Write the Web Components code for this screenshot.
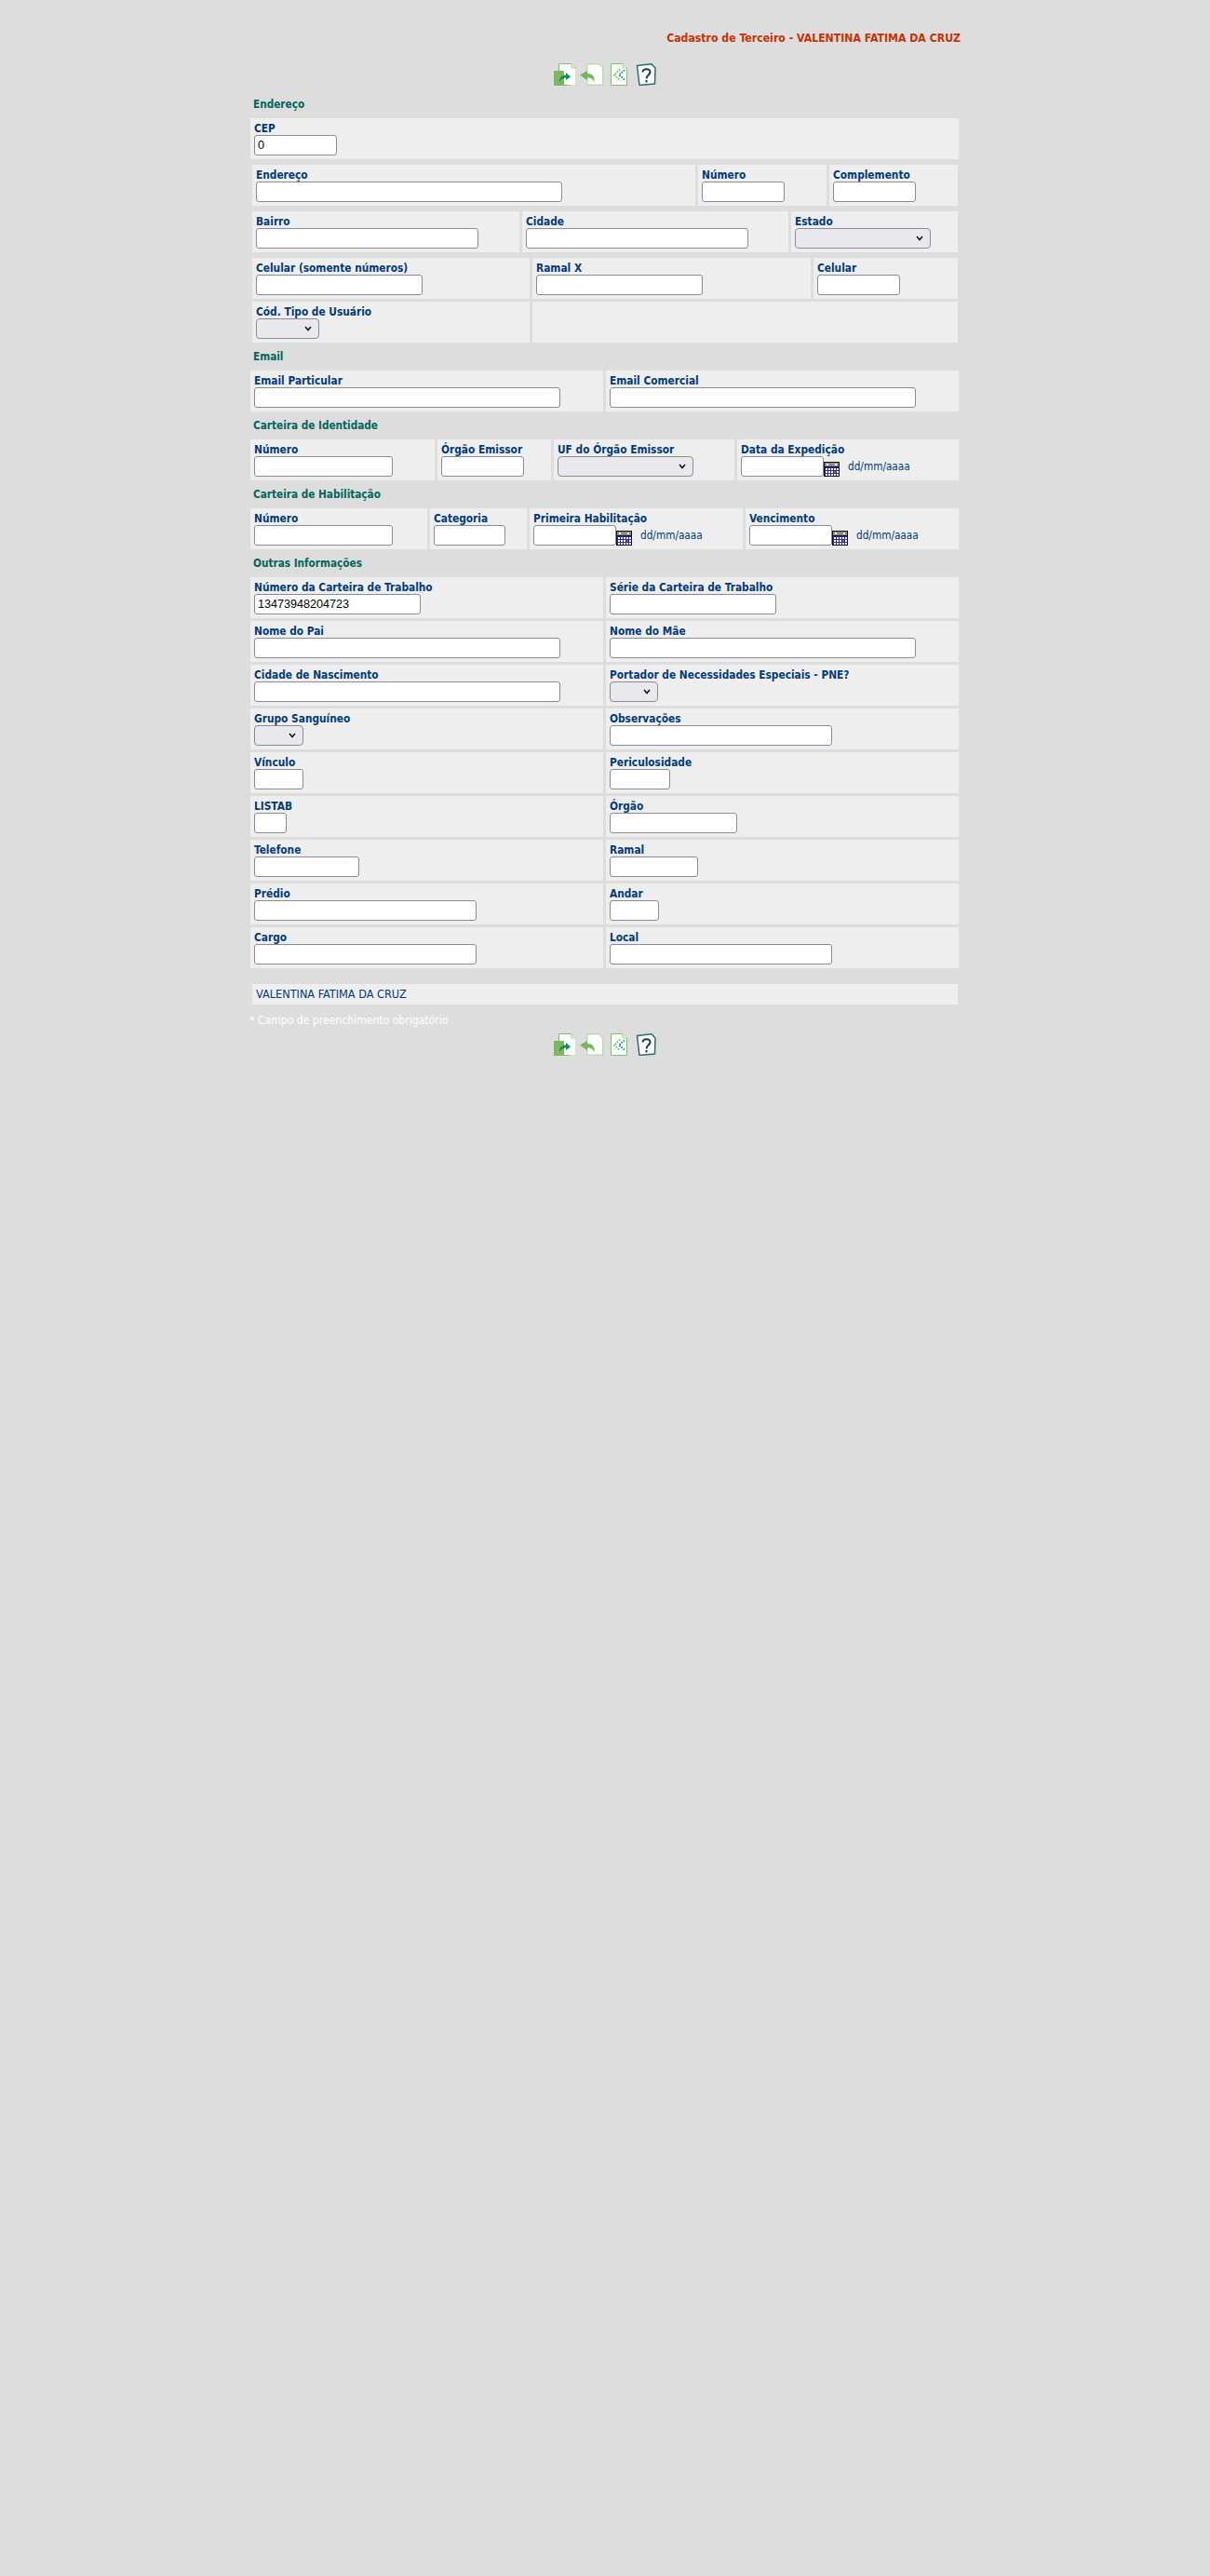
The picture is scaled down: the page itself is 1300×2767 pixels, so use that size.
<!DOCTYPE html>
<html lang="pt-BR">
<head>
<meta charset="utf-8">
<title>Cadastro de Terceiro</title>
<style>
  html, body { margin: 0; background: #dddddd; }
  body { min-height: 2767px; font-family: "DejaVu Sans", Verdana, sans-serif; }
</style>
</head>
<body>
<template id="tool-icons-tpl">
  <style>
    :host { display: flex; justify-content: center; height: 24px; }
    svg { display: block; }
  </style>
  <svg width="110" height="24" viewBox="0 0 110 24" fill="none">
    <!-- enviar -->
    <path d="M5.500.5H19L23.500 5V23.500H5.500Z" fill="#fff" stroke="#85bf68"/>
    <path d="M23.500 5V23.500H17" stroke="#cfe6c4"/>
    <path d="M19 .5V5H23.500" fill="#e4f2dc" stroke="#a9d596"/>
    <path d="M0 8H10L11 9V24H0Z" fill="#7cb75c"/>
    <path d="M6 20C6 15 9 13 13 12.500V10L18 14.500L13 18V15.500C10 15.500 8 17 6 20Z" fill="#0f8a6c"/>
    <!-- voltar -->
    <path d="M35.750.75H49L52.750 5V23.250H35.750Z" fill="#fff" stroke="#bcdcae" stroke-width="1.500"/>
    <path d="M43 21C43 17 40 15.500 36 15.500V18.500L28 12.500L36 8V11C42 11 45 15 43 21Z" fill="#77b85f"/>
    <!-- listar -->
    <path d="M61.500.5H74L78.500 5V23.500H61.500Z" fill="#fff" stroke="#84c16a"/>
    <path d="M74 .5V5H78.500" fill="#e4f2dc" stroke="#a9d596"/>
    <path d="M71 6.500L65 12.500L71 18.500" stroke="#6cc070" stroke-width="2" stroke-dasharray="1.600 1.200"/>
    <path d="M76 7.500L70 12.500L76 17.500" stroke="#1d9a7c" stroke-width="2" stroke-dasharray="1.600 1.200"/>
    <!-- ajuda -->
    <path d="M89.500 2.500L105 .7L109 5L108.500 22L92 23.500Z" fill="#fff" stroke="#2c6f6c" stroke-width="1.500"/>
    <path d="M95.500 9.500C95.500 5.500 104 5 103.500 9.500C103 13 99.500 12.500 99.500 16.500" stroke="#1c3d44" stroke-width="2"/>
    <path d="M99.500 18V20.500" stroke="#1c3d44" stroke-width="2"/>
  </svg>
</template>

<template id="field-tpl">
  <style>
    :host { display: block; box-sizing: border-box; height: 44px; padding: 4px; background: #eeeeee; white-space: nowrap; }
    .lab { display: block; height: 14px; font: bold 11.8px/14px "DejaVu Sans", Verdana, sans-serif; font-stretch: condensed; color: #003b78; }
    .ctl { display: flex; align-items: flex-start; }
    input, select { box-sizing: border-box; height: 22px; margin: 0; padding: 1px 3px; background: #fff; border: 1px solid #8a8a9e; border-radius: 3px; font: 12.6px "Liberation Sans", Arial, sans-serif; color: #000; outline: none; }
    select {
      appearance: none;
      padding: 0;
      border-radius: 4px;
      font-size: 11px;
      background: #e8e8ed url("data:image/svg+xml,%3Csvg xmlns='http://www.w3.org/2000/svg' width='8' height='6'%3E%3Cpath d='M1 1l3 3.500L7 1' fill='none' stroke='%23111' stroke-width='1.500'/%3E%3C/svg%3E") no-repeat right 7px center;
    }
    .hint { margin: 3px 0 0 0; font: 11.7px/16px "DejaVu Sans", Verdana, sans-serif; font-stretch: condensed; color: #003b78; }
    svg { display: block; margin: 6px 9px 0 0; }
  </style>
  <label class="lab"></label>
  <div class="ctl"></div>
</template>

<template id="form-row-tpl">
  <style>
    :host { display: grid; gap: 3px; margin-bottom: var(--after, 3px); }
    :host([inset]) { margin-left: 2px; margin-right: 1px; }
    ::slotted(*) { min-width: 0; }
  </style>
  <slot></slot>
</template>

<template id="section-title-tpl">
  <style>
    :host { display: block; height: 30px; padding-left: 3px; font: bold 11.7px/30px "DejaVu Sans", Verdana, sans-serif; font-stretch: condensed; color: #00665c; }
  </style>
  <slot></slot>
</template>

<template id="form-page-tpl">
  <style>
    :host { display: block; box-sizing: border-box; width: 761px; margin: 0 0 0 269px; padding-top: 34px; }
    .title { height: 15px; margin: 0 -2px 19px 0; text-align: right; font: bold 12.2px/15px "DejaVu Sans", Verdana, sans-serif; font-stretch: condensed; color: #c83200; }
    .owner { margin: 17px 1px 0 2px; height: 22px; padding-left: 4px; background: #eeeeee; font: 12.6px/22px "DejaVu Sans", Verdana, sans-serif; font-stretch: condensed; color: #003b78; }
    .note { height: 16px; margin: 9px 0 6px -1px; font: 12.1px/16px "DejaVu Sans", Verdana, sans-serif; font-stretch: condensed; color: #ffffff; }
    .rows { margin-top: 5px; }
  </style>
  <div class="title"></div>
  <tool-icons></tool-icons>
  <div class="rows"><slot></slot></div>
  <div class="owner"></div>
  <div class="note">* Campo de preenchimento obrigatório</div>
  <tool-icons></tool-icons>
</template>

<script>
class ToolIcons extends HTMLElement {
  constructor() {
    super();
    this.attachShadow({ mode: "open" }).append(document.getElementById("tool-icons-tpl").content.cloneNode(true));
  }
}

// um campo: rótulo em cima, controle embaixo
class FormField extends HTMLElement {
  constructor() {
    super();
    this.attachShadow({ mode: "open" }).append(document.getElementById("field-tpl").content.cloneNode(true));
  }
  connectedCallback() {
    const root = this.shadowRoot;
    root.querySelector(".lab").textContent = this.getAttribute("label") || "";
    const ctl = root.querySelector(".ctl");
    if (ctl.firstChild || !this.hasAttribute("w")) return;
    const type = this.getAttribute("type");
    const el = document.createElement(type === "select" ? "select" : "input");
    el.style.width = this.getAttribute("w") + "px";
    if (type === "select") el.append(document.createElement("option"));
    else el.type = "text";
    if (this.hasAttribute("value")) el.setAttribute("value", this.getAttribute("value"));
    ctl.append(el);
    if (type === "date") {
      // calendario: moldura preta, topo cinza, corpo azul com casas brancas
      let cells = "";
      for (const y of [7, 10, 13]) {
        for (const x of [2, 5, 8, 11, 14]) cells += `<rect x="${x}" y="${y}" width="2" height="2" fill="#fff"/>`;
      }
      ctl.insertAdjacentHTML("beforeend", `<svg width="17" height="16" viewBox="0 0 17 16" shape-rendering="crispEdges">
        <rect width="17" height="16" fill="#111"/>
        <rect x="1" y="1" width="15" height="4" fill="#8c8c8c"/>
        <rect x="3" y="2" width="2" height="2" fill="#fff"/><rect x="12" y="2" width="2" height="2" fill="#fff"/>
        <rect x="1" y="6" width="15" height="9" fill="#2a2ab8"/>
        ${cells}
        <rect x="11" y="10" width="2" height="2" fill="#e0401c"/>
      </svg><span class="hint">dd/mm/aaaa</span>`);
    }
  }
}

class FormRow extends HTMLElement {
  constructor() {
    super();
    this.attachShadow({ mode: "open" }).append(document.getElementById("form-row-tpl").content.cloneNode(true));
  }
  connectedCallback() {
    this.style.gridTemplateColumns = this.getAttribute("cols").split(" ").map((c) => c + "px").join(" ");
    if (this.hasAttribute("after")) this.style.setProperty("--after", this.getAttribute("after") + "px");
  }
}

class SectionTitle extends HTMLElement {
  constructor() {
    super();
    this.attachShadow({ mode: "open" }).append(document.getElementById("section-title-tpl").content.cloneNode(true));
  }
}

class FormPage extends HTMLElement {
  constructor() {
    super();
    this.attachShadow({ mode: "open" }).append(document.getElementById("form-page-tpl").content.cloneNode(true));
  }
  connectedCallback() {
    const nome = this.getAttribute("nome");
    this.shadowRoot.querySelector(".title").textContent = "Cadastro de Terceiro - " + nome;
    this.shadowRoot.querySelector(".owner").textContent = nome;
  }
}

customElements.define("tool-icons", ToolIcons);
customElements.define("form-field", FormField);
customElements.define("form-row", FormRow);
customElements.define("section-title", SectionTitle);
customElements.define("form-page", FormPage);
</script>

<form-page nome="VALENTINA FATIMA DA CRUZ">
  <section-title>Endereço</section-title>
  <form-row cols="761" after="6"><form-field label="CEP" w="89" value="0"></form-field></form-row>
  <form-row inset cols="476 138 138" after="6">
    <form-field label="Endereço" w="329"></form-field>
    <form-field label="Número" w="89"></form-field>
    <form-field label="Complemento" w="89"></form-field>
  </form-row>
  <form-row inset cols="287 286 179" after="6">
    <form-field label="Bairro" w="239"></form-field>
    <form-field label="Cidade" w="239"></form-field>
    <form-field label="Estado" w="146" type="select"></form-field>
  </form-row>
  <form-row inset cols="298 299 155">
    <form-field label="Celular (somente números)" w="179"></form-field>
    <form-field label="Ramal X" w="179"></form-field>
    <form-field label="Celular" w="89"></form-field>
  </form-row>
  <form-row inset cols="298 457" after="0">
    <form-field label="Cód. Tipo de Usuário" w="68" type="select"></form-field>
    <form-field></form-field>
  </form-row>

  <section-title>Email</section-title>
  <form-row cols="379 379" after="0">
    <form-field label="Email Particular" w="329"></form-field>
    <form-field label="Email Comercial" w="329"></form-field>
  </form-row>

  <section-title>Carteira de Identidade</section-title>
  <form-row cols="198 122 194 238" after="0">
    <form-field label="Número" w="149"></form-field>
    <form-field label="Órgão Emissor" w="89"></form-field>
    <form-field label="UF do Órgão Emissor" w="146" type="select"></form-field>
    <form-field label="Data da Expedição" w="89" type="date"></form-field>
  </form-row>

  <section-title>Carteira de Habilitação</section-title>
  <form-row cols="190 104 229 229" after="0">
    <form-field label="Número" w="149"></form-field>
    <form-field label="Categoria" w="77"></form-field>
    <form-field label="Primeira Habilitação" w="89" type="date"></form-field>
    <form-field label="Vencimento" w="89" type="date"></form-field>
  </form-row>

  <section-title>Outras Informações</section-title>
  <form-row cols="379 379">
    <form-field label="Número da Carteira de Trabalho" w="179" value="13473948204723"></form-field>
    <form-field label="Série da Carteira de Trabalho" w="179"></form-field>
  </form-row>
  <form-row cols="379 379">
    <form-field label="Nome do Pai" w="329"></form-field>
    <form-field label="Nome do Mãe" w="329"></form-field>
  </form-row>
  <form-row cols="379 379">
    <form-field label="Cidade de Nascimento" w="329"></form-field>
    <form-field label="Portador de Necessidades Especiais - PNE?" w="52" type="select"></form-field>
  </form-row>
  <form-row cols="379 379">
    <form-field label="Grupo Sanguíneo" w="53" type="select"></form-field>
    <form-field label="Observações" w="239"></form-field>
  </form-row>
  <form-row cols="379 379">
    <form-field label="Vínculo" w="53"></form-field>
    <form-field label="Periculosidade" w="65"></form-field>
  </form-row>
  <form-row cols="379 379">
    <form-field label="LISTAB" w="35"></form-field>
    <form-field label="Órgão" w="137"></form-field>
  </form-row>
  <form-row cols="379 379">
    <form-field label="Telefone" w="113"></form-field>
    <form-field label="Ramal" w="95"></form-field>
  </form-row>
  <form-row cols="379 379">
    <form-field label="Prédio" w="239"></form-field>
    <form-field label="Andar" w="53"></form-field>
  </form-row>
  <form-row cols="379 379" after="0">
    <form-field label="Cargo" w="239"></form-field>
    <form-field label="Local" w="239"></form-field>
  </form-row>
</form-page>
</body>
</html>
